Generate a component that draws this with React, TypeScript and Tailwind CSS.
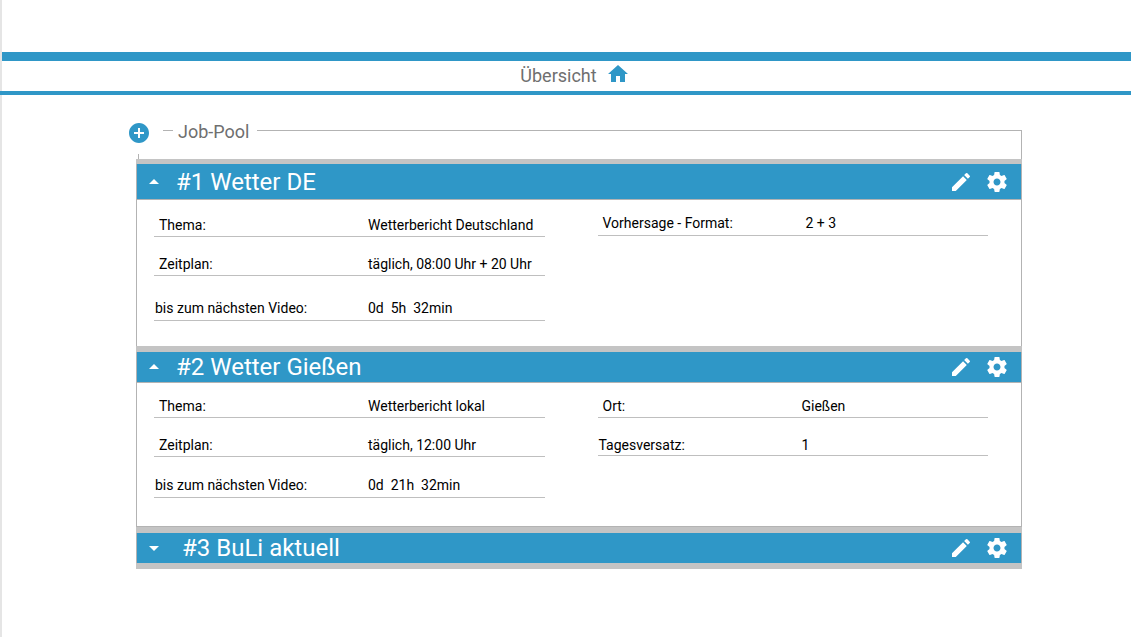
import { useState } from 'react';
import clsx from 'clsx';
import { MdAddCircle, MdArrowDropDown, MdArrowDropUp, MdEdit, MdHome } from 'react-icons/md';

type Field = { label: string; value: string; indent?: boolean; row: string };

type Job = {
  id: number;
  name: string;
  bar: string;
  body: string;
  open: boolean;
  left: Field[];
  right: Field[];
  rightLabel: string;
};

const jobs: Job[] = [
  {
    id: 1,
    name: 'Wetter DE',
    bar: 'h-[35px]',
    body: 'pb-[25px]',
    open: true,
    left: [
      { label: 'Thema:', value: 'Wetterbericht Deutschland', indent: true, row: 'h-[37px] pb-px' },
      { label: 'Zeitplan:', value: 'täglich, 08:00 Uhr + 20 Uhr', indent: true, row: 'h-[39px] pb-px' },
      { label: 'bis zum nächsten Video:', value: '0d  5h  32min', row: 'h-[45px] pb-0.5' },
    ],
    right: [{ label: 'Vorhersage - Format:', value: '2 + 3', indent: true, row: 'h-9 pb-0.5' }],
    rightLabel: 'w-[208px]',
  },
  {
    id: 2,
    name: 'Wetter Gießen',
    bar: 'h-[30px]',
    body: 'pb-[28px] border-b',
    open: true,
    left: [
      { label: 'Thema:', value: 'Wetterbericht lokal', indent: true, row: 'h-[35px] pb-px' },
      { label: 'Zeitplan:', value: 'täglich, 12:00 Uhr', indent: true, row: 'h-[39px] pb-px' },
      { label: 'bis zum nächsten Video:', value: '0d  21h  32min', row: 'h-[41px] pb-0.5' },
    ],
    right: [
      { label: 'Ort:', value: 'Gießen', indent: true, row: 'h-[35px] pb-px' },
      { label: 'Tagesversatz:', value: '1', row: 'h-[38px]' },
    ],
    rightLabel: 'w-[204px]',
  },
  {
    id: 3,
    name: 'BuLi aktuell',
    bar: 'h-[30px]',
    body: '',
    open: false,
    left: [],
    right: [],
    rightLabel: '',
  },
];

function GearIcon() {
  return (
    <svg viewBox="0 0 24 24" className="size-6" fill="currentColor" aria-hidden="true">
      <path d="M19.43 12.98c.04-.32.07-.64.07-.98s-.03-.66-.07-.98l2.11-1.65c.19-.15.24-.42.12-.64l-2-3.46c-.12-.22-.39-.3-.61-.22l-2.49 1c-.52-.4-1.08-.73-1.69-.98l-.38-2.65C14.46 2.18 14.25 2 14 2h-4c-.25 0-.46.18-.49.42l-.38 2.65c-.61.25-1.17.59-1.69.98l-2.49-1c-.23-.09-.49 0-.61.22l-2 3.46c-.13.22-.07.49.12.64l2.11 1.65c-.04.32-.07.65-.07.98s.03.66.07.98l-2.11 1.65c-.19.15-.24.42-.12.64l2 3.46c.12.22.39.3.61.22l2.49-1c.52.4 1.08.73 1.69.98l.38 2.65c.03.24.24.42.49.42h4c.25 0 .46-.18.49-.42l.38-2.65c.61-.25 1.17-.59 1.69-.98l2.49 1c.23.09.49 0 .61-.22l2-3.46c.12-.22.07-.49-.12-.64l-2.11-1.65zM12 15.5c-1.93 0-3.5-1.57-3.5-3.5s1.57-3.5 3.5-3.5 3.5 1.57 3.5 3.5-1.57 3.5-3.5 3.5z" />
    </svg>
  );
}

function FieldList({ fields, labelWidth }: { fields: Field[]; labelWidth: string }) {
  return (
    <dl className="min-w-0">
      {fields.map((field) => (
        <div
          key={field.label}
          className={clsx('flex items-end border-b border-[#bfbfbf]', field.row)}
        >
          <dt className={clsx('shrink-0', labelWidth, field.indent ? 'pl-[5px]' : 'pl-px')}>
            {field.label}
          </dt>
          <dd className="whitespace-pre">{field.value}</dd>
        </div>
      ))}
    </dl>
  );
}

function JobSection({ job, first }: { job: Job; first: boolean }) {
  const [open, setOpen] = useState(job.open);
  const Arrow = open ? MdArrowDropUp : MdArrowDropDown;

  return (
    <section>
      <div className={clsx('bg-[#c4c4c4]', first ? 'h-[5px]' : 'h-1.5')} />
      <div className="border-x border-[#b3b3b3]">
        <div
          className={clsx('flex items-center gap-3 bg-[#2f97c7] pr-3 pl-[5px] text-white', job.bar)}
        >
          <h2 className="flex-1 text-2xl leading-[30px]">
            <button
              type="button"
              aria-expanded={open}
              onClick={() => setOpen(!open)}
              className={clsx('flex items-center', job.open ? 'gap-2.5' : 'gap-4')}
            >
              <Arrow className="size-6" />
              <span>
                #{job.id} {job.name}
              </span>
            </button>
          </h2>
          <button type="button" aria-label="Bearbeiten">
            <MdEdit className="size-6" />
          </button>
          <button type="button" aria-label="Einstellungen">
            <GearIcon />
          </button>
        </div>
        {open && (
          <div
            className={clsx(
              'grid grid-cols-2 gap-x-[53px] border-t border-[#b3b3b3] pr-[33px] pl-[17px]',
              job.body,
            )}
          >
            <FieldList fields={job.left} labelWidth="w-[214px]" />
            <FieldList fields={job.right} labelWidth={job.rightLabel} />
          </div>
        )}
      </div>
    </section>
  );
}

export default function App() {
  return (
    <div className="min-h-screen border-l-2 border-[#e5e5e5] bg-white pt-[52px] font-['Roboto',sans-serif] text-sm leading-5 text-black">
      <header>
        <div className="h-[9px] bg-[#2f97c7]" />
        <nav className="flex h-[30px] items-center justify-center pl-[17px]">
          <a href="#" className="flex items-start gap-[9px] text-lg leading-8 text-[#6f6f6f]">
            Übersicht
            <MdHome className="mt-0.5 size-6 text-[#2f97c7]" />
          </a>
        </nav>
        <div className="-ml-0.5 h-1 bg-[#2f97c7]" />
      </header>

      <main className="pt-[26px] pr-[109px] pl-[125px]">
        <div className="flex h-[38px] items-stretch">
          <div className="flex flex-col justify-between">
            <button type="button" aria-label="Job hinzufügen" className="text-[#2f97c7]">
              <MdAddCircle className="size-6" />
            </button>
            <div className="ml-[11px] h-[5px] w-px bg-[#b3b3b3]" />
          </div>
          <div className="mt-[9px] ml-3 w-2.5 border-t border-[#b3b3b3]" />
          <h1 className="mr-2 ml-[5px] text-lg leading-[22px] text-[#6f6f6f]">Job-Pool</h1>
          <div className="mt-[9px] flex-1 border-t border-r border-[#b3b3b3]" />
        </div>
        <div className="ml-[9px]">
          {jobs.map((job, i) => (
            <JobSection key={job.id} job={job} first={i === 0} />
          ))}
          <div className="h-1.5 bg-[#c4c4c4]" />
        </div>
      </main>
    </div>
  );
}
